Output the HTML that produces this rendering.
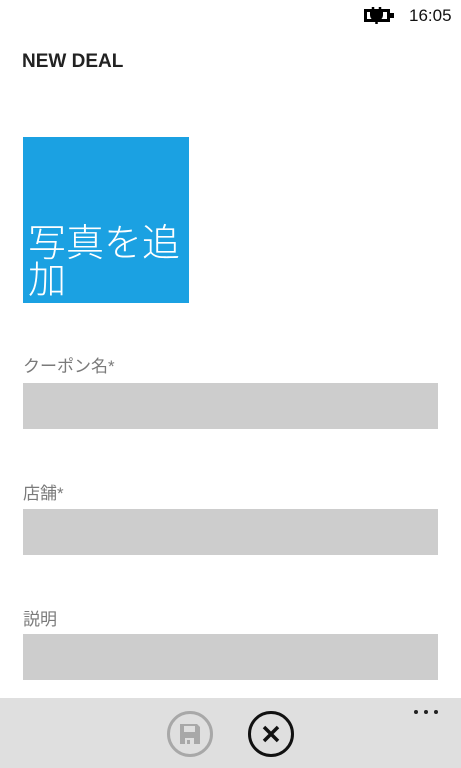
<!DOCTYPE html>
<html><head><meta charset="utf-8"><style>
body{margin:0;width:461px;height:768px;background:#fff;position:relative;overflow:hidden;font-family:"Liberation Sans","Noto Sans CJK JP",sans-serif;}
.a{position:absolute}
.lbl{position:absolute;left:23px;font-size:17px;color:#7a7a7a}
.box{position:absolute;left:23px;width:415px;height:46px;background:#cdcdcd}
</style></head><body>
<div class="a" style="left:409px;top:6px;font-size:17px;color:#111">16:05</div>
<svg class="a" style="left:363px;top:5px" width="32" height="20" viewBox="0 0 32 20"><rect x="1" y="4" width="26" height="13" fill="#000"/><rect x="27" y="8" width="4" height="5" fill="#000"/><rect x="4" y="7" width="20" height="7" fill="#fff"/><path d="M10 2v5M17 2v5" stroke="#000" stroke-width="2.5"/><path d="M7 7h13v3a6.5 6 0 0 1-13 0z" fill="#000"/><path d="M13.5 14v5" stroke="#000" stroke-width="2.5"/></svg>
<div class="a" style="left:22px;top:51px;font-size:19px;font-weight:bold;color:#222">NEW DEAL</div>
<div class="a" style="left:23px;top:137px;width:166px;height:166px;background:#1ba1e2"></div>
<div class="a" style="left:28px;top:221px;width:160px;font-family:'Noto Sans CJK JP',sans-serif;font-weight:300;font-size:38px;line-height:37px;color:#fff">写真を追加</div>
<div class="lbl" style="top:352px">クーポン名*</div>
<div class="box" style="top:383px"></div>
<div class="lbl" style="top:479px">店舗*</div>
<div class="box" style="top:509px"></div>
<div class="lbl" style="top:605px">説明</div>
<div class="box" style="top:634px"></div>
<div class="a" style="left:0;top:698px;width:461px;height:70px;background:#dfdfdf"></div>
<svg class="a" style="left:0;top:698px" width="461" height="70">
<circle cx="190" cy="36" r="21.5" fill="none" stroke="#a8a8a8" stroke-width="3"/>
<path d="M180 26h17l3 3v17h-20z" fill="#a8a8a8"/><rect x="184" y="28" width="11" height="6" fill="#dfdfdf"/><rect x="185" y="40" width="9" height="6" fill="#dfdfdf"/><rect x="187" y="42" width="3" height="4" fill="#a8a8a8"/>
<circle cx="271" cy="36" r="21.5" fill="none" stroke="#111" stroke-width="3"/>
<path d="M264 29l14 14M278 29l-14 14" stroke="#111" stroke-width="3.5"/>
<circle cx="416" cy="14" r="2" fill="#222"/><circle cx="426" cy="14" r="2" fill="#222"/><circle cx="436" cy="14" r="2" fill="#222"/>
</svg>
</body></html>
